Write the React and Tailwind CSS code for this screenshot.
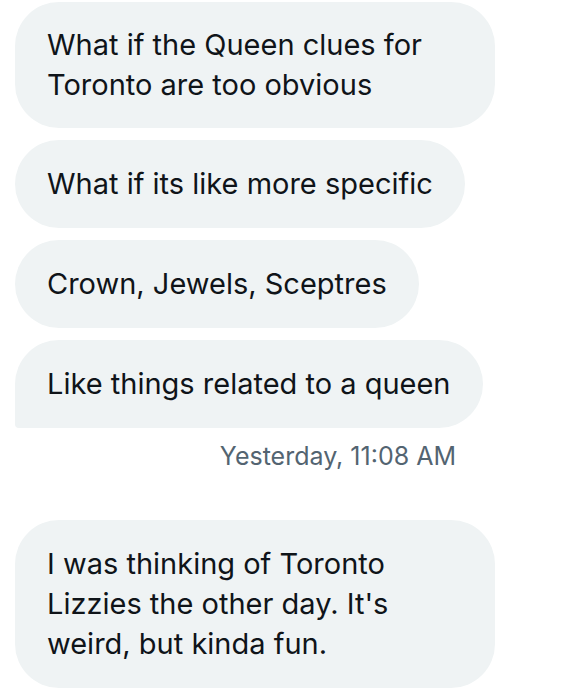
export default function App() {
  const font = { fontFamily: 'Inter, "Noto Sans", sans-serif' };
  return (
    <div className="w-[565px] h-[694px] bg-white overflow-hidden text-[#0f1419]" style={font}>
      <div className="flex flex-col items-start gap-3 pl-[15px] pt-[2px]">
        <div className="w-[480px] bg-[#eff3f4] rounded-[44px] px-8 py-[23px] text-[29px] leading-[40px]">
          What if the Queen clues for<br />Toronto are too obvious
        </div>
        <div className="bg-[#eff3f4] rounded-[44px] px-8 py-6 text-[29px] leading-[40px]">
          What if its like more specific
        </div>
        <div className="bg-[#eff3f4] rounded-[44px] px-8 py-6 text-[29px] leading-[40px]">
          Crown, Jewels, Sceptres
        </div>
        <div className="bg-[#eff3f4] rounded-[44px] rounded-bl-[4px] px-8 py-6 text-[29px] leading-[40px]">
          Like things related to a queen
        </div>
      </div>
      <div className="w-[480px] ml-[15px] flex justify-end pr-[39px] mt-[12px] text-[25px] leading-[32px] text-[#536471]">
        Yesterday, 11:08 AM
      </div>
      <div className="pl-[15px] mt-[48px]">
        <div className="w-[480px] bg-[#eff3f4] rounded-[44px] px-8 py-6 text-[29px] leading-[40px]">
          I was thinking of Toronto<br />Lizzies the other day. It's<br />weird, but kinda fun.
        </div>
      </div>
    </div>
  );
}
